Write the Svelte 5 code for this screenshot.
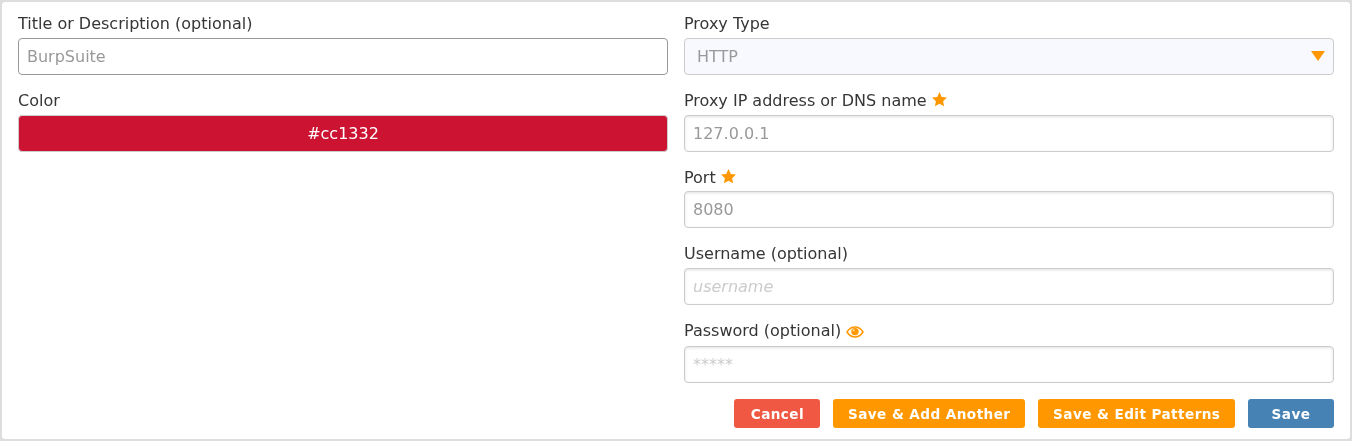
<script>
  const star = "M12 1.500l3.200 6.800 7.300.9-5.400 5.100 1.400 7.300L12 18l-6.500 3.600 1.400-7.300L1.500 9.200l7.300-.9z";
</script>

<div class="page">
  <form class="panel">
    <div class="columns">
      <div class="col">
        <div class="field">
          <label for="title">Title or Description (optional)</label>
          <input id="title" class="input strong" placeholder="BurpSuite" />
        </div>
        <div class="field">
          <label for="color">Color</label>
          <button id="color" type="button" class="swatch">#cc1332</button>
        </div>
      </div>
      <div class="col">
        <div class="field">
          <label for="type">Proxy Type</label>
          <div id="type" class="input select">
            <span>HTTP</span>
            <span class="caret"></span>
          </div>
        </div>
        <div class="field">
          <label for="host">Proxy IP address or DNS name
            <svg class="star" viewBox="0 0 24 24" aria-hidden="true"><path d={star} /></svg>
          </label>
          <input id="host" class="input" placeholder="127.0.0.1" />
        </div>
        <div class="field">
          <label for="port">Port
            <svg class="star" viewBox="0 0 24 24" aria-hidden="true"><path d={star} /></svg>
          </label>
          <input id="port" class="input" placeholder="8080" />
        </div>
        <div class="field">
          <label for="user">Username (optional)</label>
          <input id="user" class="input light italic" placeholder="username" />
        </div>
        <div class="field">
          <label for="pass" class="tall">Password (optional)
            <svg class="eye" viewBox="0 0 18 12" aria-hidden="true">
              <path d="M1 6C3 2.800 5.800 1 9 1s6 1.800 8 5c-2 3.200-4.800 5-8 5S3 9.200 1 6z" fill="none" stroke="#ff9800" stroke-width="1.500" />
              <circle cx="9" cy="5.600" r="3.700" fill="#ff9800" />
              <circle cx="7.700" cy="4.300" r="1.100" fill="#ffd9a0" />
            </svg>
          </label>
          <input id="pass" class="input light" placeholder="*****" />
        </div>
        <div class="actions">
          <button type="button" class="btn red">Cancel</button>
          <button type="button" class="btn orange">Save &amp; Add Another</button>
          <button type="button" class="btn orange">Save &amp; Edit Patterns</button>
          <button type="button" class="btn blue">Save</button>
        </div>
      </div>
    </div>
  </form>
</div>

<style>
  :global(body) {
    margin: 0;
    background: #ddd;
  }
  .page {
    height: 441px;
    box-sizing: border-box;
    padding: 2px;
    background: #ddd;
    font-family: "DejaVu Sans", sans-serif;
    font-size: 16px;
    color: #363636;
  }
  .panel {
    height: 437px;
    box-sizing: border-box;
    padding: 10px 16px 0;
    background: #fff;
    border-radius: 3px;
    will-change: transform;
  }
  .columns {
    display: grid;
    grid-template-columns: 650px 650px;
    gap: 16px;
  }
  .col {
    display: flex;
    flex-direction: column;
  }
  .field {
    margin-bottom: 13.6px;
  }
  label {
    display: block;
    box-sizing: border-box;
    height: 22.5px;
    padding-top: 0.42px;
    line-height: 24.7px;
    margin-bottom: 3.5px;
  }
  .tall {
    height: 24.500px;
  }
  .input {
    display: block;
    width: 100%;
    height: 37px;
    box-sizing: border-box;
    padding: 0 8px;
    border: 1px solid #ccc;
    border-radius: 4px;
    background: #fff;
    box-shadow: inset 0 1px 3px rgba(10, 10, 10, 0.12);
    font: inherit;
    color: #363636;
    outline: none;
  }
  .input::placeholder {
    color: #999;
    opacity: 1;
  }
  .strong {
    border-color: #999;
    box-shadow: none;
  }
  .light::placeholder {
    color: #ccc;
  }
  .italic {
    font-style: italic;
  }
  .select {
    display: flex;
    align-items: center;
    justify-content: space-between;
    padding: 0 8px 0 12px;
    background: #f8f9ff;
    box-shadow: none;
    color: #999;
  }
  .caret {
    width: 0;
    height: 0;
    margin-top: -1px;
    border-left: 7px solid transparent;
    border-right: 7px solid transparent;
    border-top: 10px solid #ff9800;
  }
  .swatch {
    display: block;
    width: 100%;
    height: 37px;
    padding: 0;
    border: 1px solid #ccc;
    border-radius: 4px;
    background: #cc1332;
    color: #fff;
    font: inherit;
  }
  .star {
    width: 17px;
    height: 17px;
    margin-left: -1px;
    vertical-align: -2px;
    fill: #ff9800;
  }
  .eye {
    width: 18px;
    height: 12px;
    vertical-align: -2px;
  }
  .actions {
    display: flex;
    justify-content: flex-end;
    gap: 12.6px;
    margin-top: 2px;
  }
  .btn {
    height: 29px;
    min-width: 86px;
    padding: 2px 15px 0;
    border: 0;
    border-radius: 3px;
    color: #fff;
    font-family: inherit;
    font-size: 13.6px;
    font-weight: 700;
    letter-spacing: 0.43px;
  }
  .red {
    background: #f05843;
  }
  .orange {
    background: #ff9800;
  }
  .blue {
    background: #4682b4;
  }
</style>
